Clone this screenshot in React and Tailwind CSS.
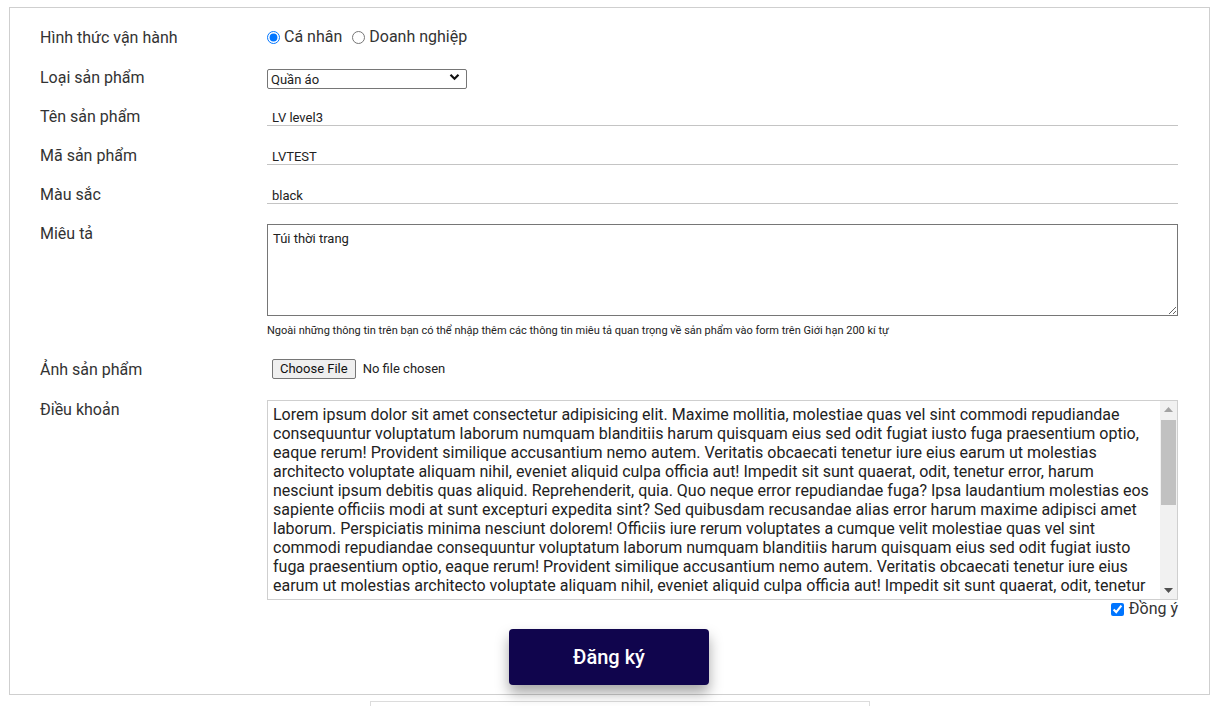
import { useState } from 'react';

const LOREM =
  'Lorem ipsum dolor sit amet consectetur adipisicing elit. Maxime mollitia, molestiae quas vel sint commodi repudiandae consequuntur voluptatum laborum numquam blanditiis harum quisquam eius sed odit fugiat iusto fuga praesentium optio, eaque rerum! Provident similique accusantium nemo autem. Veritatis obcaecati tenetur iure eius earum ut molestias architecto voluptate aliquam nihil, eveniet aliquid culpa officia aut! Impedit sit sunt quaerat, odit, tenetur error, harum nesciunt ipsum debitis quas aliquid. Reprehenderit, quia. Quo neque error repudiandae fuga? Ipsa laudantium molestias eos sapiente officiis modi at sunt excepturi expedita sint? Sed quibusdam recusandae alias error harum maxime adipisci amet laborum. Perspiciatis minima nesciunt dolorem! Officiis iure rerum voluptates a cumque velit molestiae quas vel sint commodi repudiandae consequuntur voluptatum laborum numquam blanditiis harum quisquam eius sed odit fugiat iusto fuga praesentium optio, eaque rerum! Provident similique accusantium nemo autem. Veritatis obcaecati tenetur iure eius earum ut molestias architecto voluptate aliquam nihil, eveniet aliquid culpa officia aut! Impedit sit sunt quaerat, odit, tenetur error, harum nesciunt ipsum debitis quas aliquid. Reprehenderit, quia. Quo neque error repudiandae fuga? Ipsa laudantium molestias eos sapiente officiis modi at sunt excepturi expedita sint? Sed quibusdam recusandae alias error harum maxime adipisci amet laborum. Perspiciatis minima nesciunt dolorem! Officiis iure rerum voluptates a cumque velit molestiae quas vel sint.';

function Label({ children }) {
  return <div className="w-[227px] shrink-0 text-[16px] leading-[19px] text-[#333]">{children}</div>;
}

function TextField({ value, onChange }) {
  return (
    <input
      value={value}
      onChange={(e) => onChange(e.target.value)}
      className="w-full h-[20px] border-b border-[#c4c4c4] pl-[5px] pt-[4px] text-[13px] leading-[15px] text-[#222] outline-none"
    />
  );
}

export default function App() {
  const [mode, setMode] = useState('personal');
  const [form, setForm] = useState({
    category: 'Quần áo',
    name: 'LV level3',
    code: 'LVTEST',
    color: 'black',
    desc: 'Túi thời trang',
  });
  const [agree, setAgree] = useState(true);

  const set = (key) => (v) => setForm({ ...form, [key]: v });

  return (
    <div className="bg-white min-h-[706px] pt-[7px]" style={{ fontFamily: 'Roboto, "Noto Sans", sans-serif' }}>
      <div className="ml-[9px] w-[1201px] border border-[#cfcfcf] pt-[19px] pb-[9px] pl-[30px] pr-[31px]">
        {/* Hình thức */}
        <div className="flex items-center h-[20px] mb-[20px]">
          <Label>Hình thức vận hành</Label>
          <div className="flex items-center text-[16px] text-[#333]">
            <label className="flex items-center gap-[4px]">
              <input
                type="radio"
                name="mode"
                checked={mode === 'personal'}
                onChange={() => setMode('personal')}
                className="w-[13px] h-[13px] m-0"
              />
              Cá nhân
            </label>
            <label className="flex items-center gap-[4px] ml-[10px]">
              <input
                type="radio"
                name="mode"
                checked={mode === 'business'}
                onChange={() => setMode('business')}
                className="w-[13px] h-[13px] m-0"
              />
              Doanh nghiệp
            </label>
          </div>
        </div>

        {/* Loại sản phẩm */}
        <div className="flex items-center h-[20px] mb-[19px]">
          <Label>Loại sản phẩm</Label>
          <div className="relative w-[200px] h-[20px] -mt-[1px]">
            <select
              value={form.category}
              onChange={(e) => set('category')(e.target.value)}
              className="appearance-none w-full h-full border border-[#767676] rounded-[2px] pl-[3px] text-[13px] text-[#222] outline-none bg-white"
            >
              <option>Quần áo</option>
              <option>Giày dép</option>
              <option>Phụ kiện</option>
            </select>
            <svg
              className="absolute right-[7px] top-[6px] pointer-events-none"
              width="11"
              height="8"
              viewBox="0 0 11 8"
            >
              <path d="M1.5 1.8 L5.5 5.8 L9.5 1.8" fill="none" stroke="#111" strokeWidth="2.2" />
            </svg>
          </div>
        </div>

        <div className="flex items-center h-[20px] mb-[19px]">
          <Label>Tên sản phẩm</Label>
          <TextField value={form.name} onChange={set('name')} />
        </div>
        <div className="flex items-center h-[20px] mb-[19px]">
          <Label>Mã sản phẩm</Label>
          <TextField value={form.code} onChange={set('code')} />
        </div>
        <div className="flex items-center h-[20px] mb-[20px]">
          <Label>Màu sắc</Label>
          <TextField value={form.color} onChange={set('color')} />
        </div>

        {/* Miêu tả */}
        <div className="flex items-start">
          <Label>Miêu tả</Label>
          <div className="flex-1">
            <textarea
              value={form.desc}
              onChange={(e) => set('desc')(e.target.value)}
              className="block w-full h-[92px] border border-[#767676] px-[5px] py-[6px] text-[13px] leading-[15px] text-[#222] outline-none"
            />
            <p className="mt-[9px] text-[11px] leading-[12px] text-[#222]">
              Ngoài những thông tin trên bạn có thể nhập thêm các thông tin miêu tả quan trọng về sản phẩm vào form trên Giới hạn 200 kí tự
            </p>
          </div>
        </div>

        {/* Ảnh sản phẩm */}
        <div className="flex items-center h-[20px] mt-[22px] mb-[21px]">
          <Label>Ảnh sản phẩm</Label>
          <div className="flex items-center pl-[5px]">
            <button className="h-[20px] px-[7px] border border-[#767676] rounded-[2px] bg-[#efefef] text-[13px] leading-[18px] text-[#111]">
              Choose File
            </button>
            <span className="ml-[7px] text-[13px] text-[#222]">No file chosen</span>
          </div>
        </div>

        {/* Điều khoản */}
        <div className="flex items-start">
          <Label>Điều khoản</Label>
          <div className="flex-1">
            <div className="flex items-start h-[200px] border border-[#cfcfcf]">
              <textarea
                readOnly
                value={LOREM}
                className="flex-1 h-[196px] pl-[5px] pr-[2px] pt-[4px] text-[16px] leading-[19px] text-[#222] outline-none resize-none overflow-hidden"
              />
              {/* scrollbar */}
              <div className="w-[17px] h-full shrink-0 bg-[#f1f1f1] flex flex-col items-center">
                <div className="h-[17px] flex items-center justify-center">
                  <svg width="9" height="5" viewBox="0 0 9 5">
                    <path d="M4.5 0 L9 5 L0 5 Z" fill="#a3a3a3" />
                  </svg>
                </div>
                <div className="w-[15px] h-[85px] mt-[2px] bg-[#c1c1c1]" />
                <div className="flex-1" />
                <div className="h-[17px] flex items-center justify-center">
                  <svg width="9" height="5" viewBox="0 0 9 5">
                    <path d="M0 0 L9 0 L4.5 5 Z" fill="#505050" />
                  </svg>
                </div>
              </div>
            </div>
            <label className="flex items-center justify-end gap-[5px] mt-[1px] h-[16px] text-[16px] text-[#333]">
              <input
                type="checkbox"
                checked={agree}
                onChange={(e) => setAgree(e.target.checked)}
                className="w-[13px] h-[13px] m-0"
              />
              Đồng ý
            </label>
          </div>
        </div>

        <div className="flex justify-center mt-[12px]">
          <button className="w-[200px] h-[56px] rounded-[4px] bg-[#10054d] text-white text-[20px] font-medium shadow-[0_8px_14px_rgba(0,0,0,0.35)]">
            Đăng ký
          </button>
        </div>
      </div>

      <div className="ml-[370px] mt-[6px] w-[500px] h-[30px] border border-[#dcdcdc]" />
    </div>
  );
}
